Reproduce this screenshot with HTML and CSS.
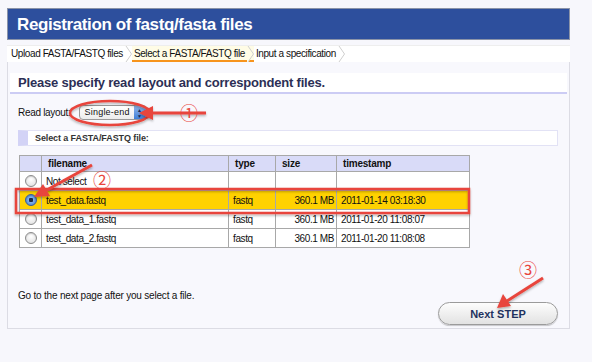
FILE: index.html
```html
<!DOCTYPE html>
<html lang="en">
<head>
  <meta charset="UTF-8">
  <title>Registration of fastq/fasta files</title>
  <link rel="stylesheet" href="styles.css">
</head>
<body>
  <div class="wrap">
    <h1 class="title">Registration of fastq/fasta files</h1>

    <!-- step breadcrumbs -->
    <ul class="steps">
      <li><span>Upload FASTA/FASTQ files</span><svg class="chev" width="7" height="16"><polygon points="0,0 1,0 6.5,8 1,16 0,16"/><polyline points="1,0 6.5,8 1,16"/></svg></li>
      <li class="current"><span>Select a FASTA/FASTQ file</span><svg class="chev" width="7" height="16"><polygon points="0,0 1,0 6.5,8 1,16 0,16"/><polyline points="1,0 6.5,8 1,16"/></svg></li>
      <li><span>Input a specification</span><svg class="chev" width="7" height="16"><polygon points="0,0 1,0 6.5,8 1,16 0,16"/><polyline points="1,0 6.5,8 1,16"/></svg></li>
    </ul>

    <div class="panel">
      <h2 class="heading">Please specify read layout and correspondent files.</h2>

      <div class="body">
        <div class="layout-row">
          <span class="label">Read layout:</span>
          <span class="popup">
            <span class="popup-text">Single-end</span>
            <span class="popup-arrows">&#9650;<br>&#9660;</span>
          </span>
        </div>

        <div class="section">Select a FASTA/FASTQ file:</div>

        <table class="files">
          <tr>
            <th class="c-radio"></th>
            <th class="c-name">filename</th>
            <th class="c-type">type</th>
            <th class="c-size">size</th>
            <th class="c-time">timestamp</th>
          </tr>
          <tr>
            <td class="c-radio"><span class="radio"></span></td>
            <td>Not select</td>
            <td></td>
            <td></td>
            <td></td>
          </tr>
          <tr class="selected">
            <td class="c-radio"><span class="radio checked"></span></td>
            <td>test_data.fastq</td>
            <td>fastq</td>
            <td class="c-size">360.1 MB</td>
            <td>2011-01-14 03:18:30</td>
          </tr>
          <tr>
            <td class="c-radio"><span class="radio"></span></td>
            <td>test_data_1.fastq</td>
            <td>fastq</td>
            <td class="c-size">360.1 MB</td>
            <td>2011-01-20 11:08:07</td>
          </tr>
          <tr>
            <td class="c-radio"><span class="radio"></span></td>
            <td>test_data_2.fastq</td>
            <td>fastq</td>
            <td class="c-size">360.1 MB</td>
            <td>2011-01-20 11:08:08</td>
          </tr>
        </table>

        <p class="hint">Go to the next page after you select a file.</p>
        <div class="actions">
          <button class="next">Next STEP</button>
        </div>
      </div>
    </div>
  </div>

  <!-- red annotation marks drawn over the screenshot -->
  <svg class="notes" width="592" height="362" viewBox="0 0 592 362">
    <defs>
      <filter id="soft" x="-10%" y="-10%" width="120%" height="130%">
        <feDropShadow dx="0" dy="1.5" stdDeviation="1" flood-color="#000" flood-opacity="0.3"/>
      </filter>
    </defs>
    <g filter="url(#soft)" stroke="#e8453c" fill="none">
      <ellipse cx="110" cy="113" rx="40" ry="12" stroke-width="2.5"/>
      <rect x="16" y="189" width="453" height="24" stroke-width="2.5"/>
    </g>
    <g filter="url(#soft)" fill="#e8453c" stroke="#e8453c">
      <line x1="206" y1="113" x2="150" y2="113" stroke-width="3"/>
      <polygon points="139,113 153,106 153,120" stroke="none"/>
      <line x1="92" y1="165" x2="45" y2="191" stroke-width="3"/>
      <polygon points="34,197 43,184 50,196" stroke="none"/>
      <line x1="543" y1="278" x2="507" y2="301" stroke-width="3"/>
      <polygon points="497,308 503,294 511,306" stroke="none"/>
    </g>
    <g class="num" fill="#e8453c">
      <text x="189" y="120">&#9312;</text>
      <text x="102" y="187">&#9313;</text>
      <text x="528" y="277">&#9314;</text>
    </g>
  </svg>
</body>
</html>
```

FILE: styles.css
```css
/* Base */
body {
  margin: 0;
  padding: 0;
  font-family: "Liberation Sans", Arial, sans-serif;
  background-color: #f7f7fc;
  color: #111;
}

.wrap {
  width: 563px;
  margin-left: 7px;
  padding-top: 8px;
}

/* Blue title bar */
.title {
  margin: 0;
  height: 30px;
  line-height: 31px;
  padding-left: 9px;
  background-color: #2d4f9d;
  border: 1px solid #8a93a8;
  color: #fff;
  font-size: 17px;
  font-weight: bold;
  letter-spacing: -0.4px;
}

/* Breadcrumbs */
.steps {
  list-style: none;
  margin: 5px 0 0;
  padding: 0;
  height: 16px;
  display: flex;
  background-color: #fff;
  border-top: 1px solid #eee;
  overflow: hidden;
}

.steps li {
  display: flex;
  align-items: center;
  padding-left: 2px;
  font-size: 10px;
  letter-spacing: -0.4px;
  line-height: 16px;
}

.steps li:first-child {
  padding-left: 4px;
}

.steps li span {
  padding-right: 2px;
}

.chev {
  display: block;
}

.chev polygon {
  fill: #fff;
}

.chev polyline {
  fill: none;
  stroke: #cfcfcf;
  stroke-width: 1;
}

.steps li.current {
  background-color: #fffce6;
  box-shadow: inset 0 -2px 0 #f7941d;
}

.steps li.current .chev polygon {
  fill: #fffce6;
}

/* Main panel */
.panel {
  border: 1px solid #dcdce4;
  border-top: none;
  background-color: #f8f8fd;
  padding: 11px 2px 3px 2px;
}

.heading {
  margin: 0;
  height: 19px;
  line-height: 20px;
  padding-left: 8px;
  background-color: #fff;
  border-bottom: 2px solid #ccccf4;
  font-size: 13px;
  letter-spacing: -0.2px;
  font-weight: bold;
  color: #2c2f55;
}

.body {
  padding: 0 9px 0 8px;
}

.layout-row {
  display: flex;
  align-items: center;
  margin-top: 11px;
  height: 15px;
  font-size: 10px;
}

.label {
  margin-right: 8px;
  letter-spacing: -0.3px;
}

.popup {
  display: flex;
  align-items: stretch;
  height: 13px;
  width: 66px;
  border: 1px solid #9a9a9a;
  border-radius: 4px;
  background: linear-gradient(#fff, #ececec);
  overflow: hidden;
  font-size: 9px;
  white-space: nowrap;
}

.popup-text {
  flex: 1;
  line-height: 13px;
  padding-left: 5px;
  letter-spacing: 0.2px;
}

.popup-arrows {
  width: 12px;
  background: linear-gradient(#8fb5ea, #3f7fd8);
  color: #1b2b55;
  font-size: 5px;
  line-height: 6px;
  text-align: center;
  padding-top: 1px;
}

.section {
  margin-top: 10px;
  height: 14px;
  line-height: 14px;
  padding-left: 7px;
  background-color: #fff;
  border: 1px solid #e2e2f5;
  border-left: 10px solid #d3d3f6;
  font-size: 9px;
  font-weight: bold;
  letter-spacing: -0.1px;
  color: #333;
}

/* File table */
.files {
  margin: 9px 0 0 1px;
  border-collapse: collapse;
  width: 451px;
  font-size: 10px;
  letter-spacing: -0.4px;
  background-color: #fff;
}

.files th,
.files td {
  border: 1px solid #a8a8a8;
  padding: 0 4px;
  text-align: left;
  height: 18px;
}

.files th {
  height: 15px;
  background-color: #d9dbf8;
  font-weight: bold;
  padding-left: 6px;
  letter-spacing: -0.2px;
}

.files .c-radio { width: 13px; padding: 0 4px; text-align: center; }
.files .c-name { width: 176px; }
.files .c-type { width: 36px; }
.files td.c-size { text-align: right; padding-right: 2px; }
.files .c-size { width: 50px; }

.files tr.selected td {
  background-color: #ffd200;
}

.radio {
  display: inline-block;
  vertical-align: middle;
  width: 10px;
  height: 10px;
  border: 1px solid #8c8c8c;
  border-radius: 50%;
  background: radial-gradient(circle at 50% 35%, #fff, #dcdcdc);
  box-shadow: inset 0 1px 1px rgba(0,0,0,0.15);
}

.radio.checked {
  border-color: #3b5f96;
  background: radial-gradient(circle, #1c2a44 0 2px, #7fb0ec 2.5px, #3d78c9 100%);
}

.hint {
  margin: 42px 0 0;
  font-size: 10px;
  line-height: 12px;
  letter-spacing: -0.2px;
}

.actions {
  display: flex;
  justify-content: flex-end;
}

.next {
  width: 120px;
  height: 23px;
  border: 1px solid #9b9b9b;
  border-radius: 12px;
  background: linear-gradient(#fdfdfd, #e2e2e2);
  box-shadow: 0 1px 1px rgba(0,0,0,0.2);
  font-family: "Liberation Sans", Arial, sans-serif;
  font-size: 11px;
  font-weight: bold;
  color: #1f3260;
  cursor: pointer;
}

/* Annotations */
.notes {
  position: absolute;
  top: 0;
  left: 0;
  pointer-events: none;
}

.num text {
  font-family: "Noto Sans CJK JP", "DejaVu Sans", sans-serif;
  font-size: 18px;
  text-anchor: middle;
}
```
